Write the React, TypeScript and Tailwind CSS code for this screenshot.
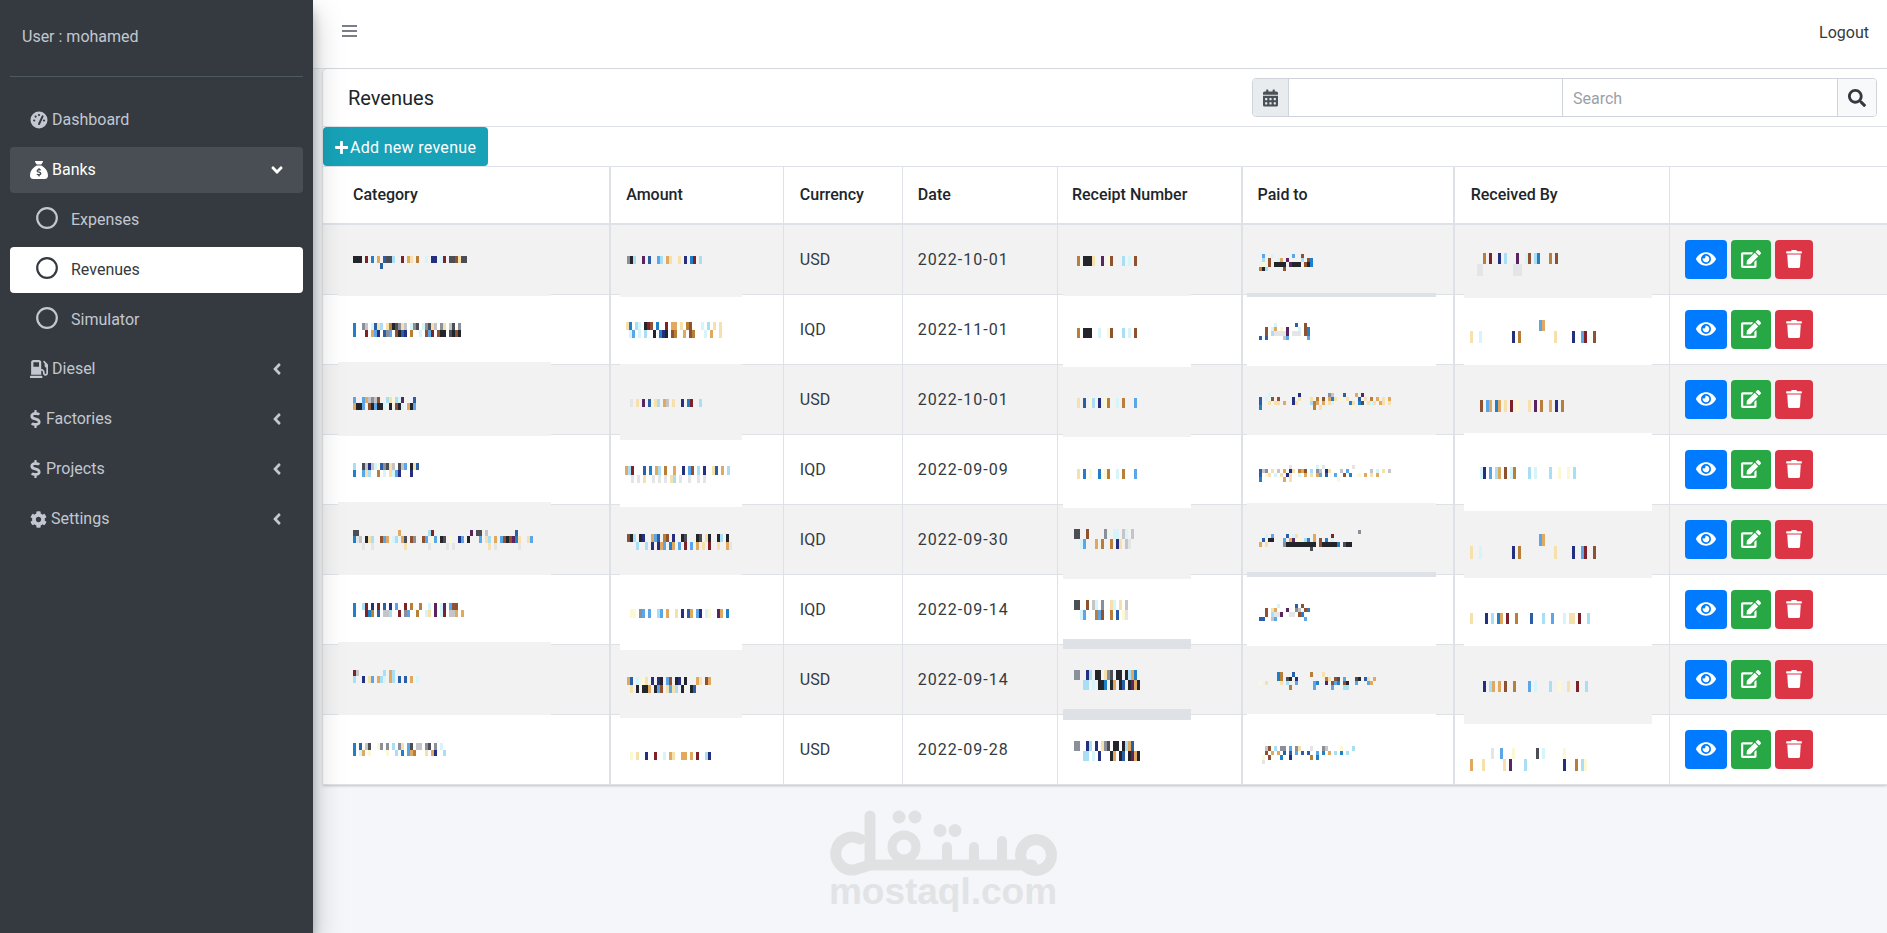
import { FaGasPump, FaDollarSign, FaCog, FaAngleLeft, FaAngleDown, FaCalendarAlt, FaSearch, FaEye, FaEdit, FaTrash, FaPlus } from "react-icons/fa";
import { FaSackDollar } from "react-icons/fa6";
import type { ReactNode } from "react";

const swatch: Record<string, string> = {
  k: "#23252b", b: "#2a5fa8", n: "#24307f", l: "#5ba6e8", c: "#a8dff5", s: "#d6f5fb",
  o: "#e0a95f", r: "#b87f38", w: "#8e5230", m: "#7c2228", p: "#5a2460", y: "#f6e0ac",
  i: "#fdf8d4", g: "#8a8f99", h: "#c5c5c8", e: "#e4e5e7", d: "#4b4f55", B: "#1f80c8",
};

// blurred-out values in the table: each strip is [height, colours], one char = 3px
type Blur = { x: number; y: number; s: [number, string][] };

const category: Blur[] = [
  { x: 30, y: 31, s: [[7, "kkk.m.B.o.bddc..m.oy.r..s.nn.sm.ddwydd"], [6, ".........b"]] },
  { x: 30, y: 28, s: [[7, "B..gh.sbyc.yrkdgyh.sgd.sgdyh.gy.hd.g"], [7, "B...m.oln.bgl.wkbn.r..s.wlm.wkk.dkwk"]] },
  { x: 30, y: 32, s: [[6, "l..lohghw..cyicsp...b"], [7, "okkl.wklkks.k.wks.okl"]] },
  { x: 30, y: 28, s: [[7, "c..dhnhsibgdyh.dhl.kyb"], [7, "B..lyc..r.s.ysln...n.."]] },
  { x: 30, y: 25, s: [[6, "dd.............o.........cm............p.dd.h.........b"], [7, "Beh.kyc..wlo.sc.od.wg..wl.il.kd.i..nl.k...l.yc.o.lwkwpBy..yl"], [7, "...e..e..........y.......e.....e.e...........y.e.......e"]] },
  { x: 30, y: 28, s: [[7, "B..cm.n.m.b.n.l..m.r..r..s.p.sp.lww"], [7, "B...mBr.b.hhc..m.gl..r..sy.p.sm.hho.o"]] },
  { x: 30, y: 25, s: [[6, "mh........c.oc"], [7, "c..n.yl.ocs.oc.b.b.o.s"]] },
  { x: 30, y: 28, s: [[7, "B.b.hd..ig.g.c.gy.ld.hh.gd.g.s"], [6, "B.so.i.....i..c.B.lor...y.on..c"]] },
];
const amount: Blur[] = [
  { x: 16, y: 31, s: [[8, "gkc..p.b..lc.oy..y.n.Bm.c"]] },
  { x: 15, y: 27, s: [[8, "yB.cs.kmw.B..m.oo.y.rw...s.c.y.y"], [8, ".sl.s.c..k.Bnk.wr..o.wr...s.o..y"]] },
  { x: 19, y: 34, s: [[8, "e.y.p.b.yc.oh.y..n.Bm..c"]] },
  { x: 14, y: 31, s: [[9, "ocm...b.B.oc.r..o..n.lw.c.n..yb.o.c"], [8, "..e.e.y..e.e.e.yc.e..e..e.e"]] },
  { x: 16, y: 29, s: [[8, "wkc.kn..olb.rw.n..kd...kd.yk..kc.k"], [8, "...c..c.n.nol.Bo.l.m.l.o.y.m..y..oe"]] },
  { x: 19, y: 34, s: [[9, "ii.gl.l..cl.o..y.n.bo.ln.si..po.B"]] },
  { x: 16, y: 32, s: [[8, "ob.s.iy.n.nk.lw.kn.k...oy.wo"], [8, ".y.k.kko.klw.ylyc.k..kb"]] },
  { x: 19, y: 37, s: [[8, "i.y..n..m..s.oy..oo.o.m..cn"]] },
];
const receipt: Blur[] = [
  { x: 19, y: 31, s: [[10, "r.kkky..p.iw...c.s.w"]] },
  { x: 19, y: 33, s: [[10, "r.kkk..s..iw...c.s.w"]] },
  { x: 19, y: 33, s: [[10, "y.b.ic.n.ir..s.r...l"]] },
  { x: 19, y: 34, s: [[10, "y.B.i..B.ir..s.r...l"]] },
  { x: 16, y: 24, s: [[10, "dd..w.....g..ss.hs.h"], [10, "..sl...o.r..r.ny.he"]] },
  { x: 16, y: 25, s: [[10, "dd..w.hs.g..ys.y.h"], [10, "..sl...rlw..r.b.ie"]] },
  { x: 16, y: 25, s: [[10, "gg..nc.kk.ygd.kk.kcoB"], [10, "...cc.s.kkB.ko.kb.kpok"]] },
  { x: 16, y: 26, s: [[10, "gg..nc.n.ygd.kk.kcob"], [10, "...cc.s.n...ko.kb.kpok"]] },
];
const paid: Blur[] = [
  { x: 16, y: 29, s: [[4, ".l..s......l..w"], [4, ".c.w..so.p....c.wB"], [5, ".i.w.kkkk.pkkk.wkB"], [4, "rkc.....w"]] },
  { x: 16, y: 28, s: [[4, ".....s......b..w"], [4, "..w.so.i.p...s.wB"], [5, "..w.ceeeep.eee.wB"], [4, "b.b.....hl......l"]] },
  { x: 16, y: 28, s: [[4, "...s.........n.........gh...b...o.p"], [4, "b.s.w.w....n.y...y.r.w.oBy.i.y...b.y.r.o.y.o"], [4, "b..y.yy.o..ny....cro.o.ys.....By.Bd.ysy.oy.y"], [5, "B.................r.y..........i.."]] },
  { x: 16, y: 30, s: [[4, "..........e........s.e.........e"], [4, "bhg.y.h.o.ny.row.c.gh.ny...h.l.......h.s.y.h"], [4, "b.iy.s.y.ny..s.o.y.ol.b..l..w.B..i.o.y.o"], [5, "B.......o.y...............i..."]] },
  { x: 16, y: 25, s: [[4, ".................................g"], [4, "..s.l....b.sy.....o.....m"], [4, ".b.kk...l.op.i.cB.o.w.B.s"], [5, "o.y.....gkkkkkkkkkk.wkkkkkB.dkk"], [4, ".................d"]] },
  { x: 16, y: 29, s: [[4, "......s.....b.w"], [4, "..w.yo...p..gh.wB"], [5, "..w.ceep..ee.wB"], [4, "bb..hl.........l"]] },
  { x: 16, y: 27, s: [[5, "......Br...b.....r...y"], [4, "......Br.dk.n.........ry.wd.l...dk.by.o"], [4, "i.y....y.cs.l.....lB..p.wlB.wk..l...lo"], [5, "..........r.......l.....l...cc"]] },
  { x: 16, y: 31, s: [[5, "..hw.c.gg.l.gy...e...gh....i...c"], [4, "..w.o.o.b.b.l.b.b..l.B.o.c.B.c"], [5, ".i.w...B..n......r.B"], [4, ".e"]] },
];
const received: Blur[] = [
  { x: 22, y: 28, s: [[11, "..r.m..n.c...p..sw.cB...r.w"], [12, "ee..........eee"]] },
  { x: 15, y: 25, s: [[11, ".......................lo"], [12, "y..s..........n.r...........y.....n..lm..w"]] },
  { x: 25, y: 35, s: [[12, "w.lo.Bo.y.m.i...y.p.r..o.n.r"]] },
  { x: 25, y: 32, s: [[12, "sn.l.co.w.sr....c.s....c..i..i.c"]] },
  { x: 15, y: 29, s: [[12, ".......................lo"], [13, "y..s..........n.r...........y.....n..lm..w"]] },
  { x: 15, y: 38, s: [[11, "y....n.c.Bo.m..r....b...c..l...s.yy.m..c"]] },
  { x: 28, y: 36, s: [[11, "n.co.o.w..r....l.s....c..i..y..m..c"]] },
  { x: 15, y: 33, s: [[11, ".......e..l...i.......d.s......i"], [12, "o...y......y.p....c............n...r.ci"]] },
];

// patches left behind by the blur: where each cell's fill ends, in page y, [a, b] leaves a grey bar
type Cut = number | [number, number];
const patches: Record<string, { x: number; w: number; cuts: Cut[] }> = {
  category: { x: 15, w: 213, cuts: [296, 362, 436, 502, 575, 642, 715] },
  amount: { x: 9, w: 122, cuts: [297, 364, 440, 507, 575, 650, 718] },
  receipt: { x: 5, w: 128, cuts: [296, 367, 437, 508, 579, [639, 649], [709, 720]] },
  paid: { x: 4, w: 189, cuts: [[293, 297], 366, 435, 503, [572, 577], 646, 714] },
  received: { x: 9, w: 188, cuts: [298, 365, 433, 511, 578, 646, 724] },
};

const rows = [
  ["USD", "2022-10-01"], ["IQD", "2022-11-01"], ["USD", "2022-10-01"], ["IQD", "2022-09-09"],
  ["IQD", "2022-09-30"], ["IQD", "2022-09-14"], ["USD", "2022-09-14"], ["USD", "2022-09-28"],
];

function BlurCell({ col, blurs, row, border }: { col: string; blurs: Blur[]; row: number; border: string }) {
  const { x, w, cuts } = patches[col];
  const rowY = 225 + row * 70;
  const prev = row > 0 ? cuts[row - 1] : 225;
  const next = row < 7 ? cuts[row] : 784;
  const top = typeof prev === "number" ? prev : prev[1];
  const bottom = typeof next === "number" ? next : next[0];
  const fill = row % 2 === 0 ? "#f2f2f2" : "#ffffff";
  const blur = blurs[row];
  let y = blur.y;
  return (
    <td className={`p-0 ${border} border-[#dee2e6]`}>
      <svg className="block h-[69px] w-full overflow-visible">
        <rect x={x} y={top - rowY} width={w} height={bottom - top} fill={fill} />
        {Array.isArray(next) && <rect x={x} y={next[0] - rowY} width={w} height={next[1] - next[0]} fill="#dee2e6" />}
        {blur.s.map(([h, str], i) => {
          const rowTop = y;
          y += h;
          return (
            <g key={i}>
              {str.split("").map((c, j) =>
                swatch[c] ? <rect key={j} x={blur.x + j * 3} y={rowTop} width={3} height={h} fill={swatch[c]} /> : null
              )}
            </g>
          );
        })}
      </svg>
    </td>
  );
}

function GaugeIcon() {
  return (
    <svg width="18" height="18" viewBox="0 0 18 18">
      <circle cx="9" cy="9" r="8.5" fill="currentColor" />
      <g fill="#343a40">
        <circle cx="4.2" cy="9.5" r="1.1" />
        <circle cx="5.6" cy="5.6" r="1.1" />
        <circle cx="9" cy="4" r="1.1" />
        <circle cx="14" cy="9.5" r="1.1" />
      </g>
      <path d="M9 13 L12.6 5.4" stroke="#343a40" strokeWidth="2" strokeLinecap="round" />
    </svg>
  );
}

function NavItem({ icon, label, arrow, active, gap = "gap-1" }: { icon: ReactNode; label: string; arrow?: "left" | "down"; active?: boolean; gap?: string }) {
  return (
    <a className={`flex h-[46px] items-center rounded pl-[20px] pr-[20px] text-[16px] ${active ? "bg-white/10 text-white" : "text-[#c2c7d0]"}`}>
      <span className={`flex items-center ${gap}`}>
        {icon}
        {label}
      </span>
      {arrow === "left" && <FaAngleLeft className="ml-auto h-[18px] w-[12px]" />}
      {arrow === "down" && <FaAngleDown className="ml-auto h-[18px] w-[16px] -mr-[2px]" />}
    </a>
  );
}

function SubItem({ label, active }: { label: string; active?: boolean }) {
  return (
    <a className={`flex h-[46px] items-center gap-[13px] rounded pl-[26px] text-[16px] ${active ? "bg-white text-[#343a40]" : "text-[#c2c7d0]"}`}>
      <svg width="22" height="22" viewBox="0 0 22 22" className="-mt-[3px]">
        <circle cx="11" cy="11" r="9.8" fill="none" stroke="currentColor" strokeWidth="2.2" />
      </svg>
      {label}
    </a>
  );
}

function Watermark() {
  return (
    <div className="absolute left-[830px] top-[810px] flex w-[230px] flex-col items-center">
      <svg width="230" height="70" viewBox="48 50 230 70" fill="none" stroke="#e0e1e3" strokeLinecap="round" strokeLinejoin="round">
        <circle cx="254" cy="95" r="15.5" strokeWidth="11" />
        <circle cx="122" cy="87" r="12" strokeWidth="9" />
        <path d="M78 79 A16.5 16.5 0 1 0 72 110 L88 105 L250 105" strokeWidth="11" />
        <path d="M88 56 V104" strokeWidth="11" />
        <path d="M220 81 V104 M192 87 V104 M165 87 V104" strokeWidth="10" />
        <g fill="#e0e1e3" stroke="none">
          <circle cx="158" cy="70.5" r="6.5" />
          <circle cx="173" cy="70.5" r="6.5" />
          <circle cx="117" cy="57" r="6.5" />
          <circle cx="133" cy="57" r="6.5" />
        </g>
      </svg>
      <div className="-ml-[4px] -mt-[8px] font-['Liberation_Sans',sans-serif] text-[37px] font-bold leading-[40px] text-[#e2e3e5]">mostaql.com</div>
    </div>
  );
}

const headers = ["Category", "Amount", "Currency", "Date", "Receipt Number", "Paid to", "Received By", ""];
const widths = [287, 173, 119, 155, 184, 212, 216, 217];
const borders = ["border-r-2", "border-r", "border-r", "border-r", "border-r-2", "border-r-2", "border-r", ""];
const pads = ["pl-[30px]", "pl-[15px]", "pl-4", "pl-[15px]", "pl-[14px]", "pl-[15px]", "pl-4", ""];

export default function App() {
  return (
    <div className="relative flex h-[933px] w-[1887px] overflow-hidden bg-[#f4f6f9] font-['Roboto',sans-serif] text-[16px] text-[#212529]">
      {/* Sidebar */}
      <aside className="z-10 flex w-[313px] shrink-0 flex-col bg-[#343a40] px-[10px] shadow-[0_14px_28px_rgba(0,0,0,0.25),0_10px_10px_rgba(0,0,0,0.22)]">
        <div className="flex h-[77px] items-center border-b border-[#4f5962] pb-[3px] pl-[12px] text-[#c2c7d0]">User : mohamed</div>
        <nav className="mt-[20px] flex flex-col gap-[3.9px]">
          <NavItem icon={<GaugeIcon />} label="Dashboard" />
          <NavItem icon={<FaSackDollar className="h-[18px] w-[18px]" />} label="Banks" arrow="down" active />
          <SubItem label="Expenses" />
          <SubItem label="Revenues" active />
          <SubItem label="Simulator" />
          <NavItem icon={<FaGasPump className="h-[18px] w-[18px]" />} label="Diesel" arrow="left" />
          <NavItem icon={<FaDollarSign className="h-[18px] w-[11px]" />} label="Factories" arrow="left" gap="gap-[5px]" />
          <NavItem icon={<FaDollarSign className="h-[18px] w-[11px]" />} label="Projects" arrow="left" gap="gap-[5px]" />
          <NavItem icon={<FaCog className="h-[17px] w-[17px]" />} label="Settings" arrow="left" />
        </nav>
      </aside>

      {/* Main */}
      <main className="min-w-0 flex-1">
        <header className="flex h-[69px] items-center justify-between border-b border-[#dee2e6] bg-white pl-[29px] pr-[18px]">
          <svg width="15" height="14" viewBox="0 0 15 14" className="-translate-y-[3px]">
            <path d="M0 2 H15 M0 7 H15 M0 12 H15" stroke="#7b7f85" strokeWidth="2" />
          </svg>
          <span className="-translate-y-[1px] text-[#343a40]">Logout</span>
        </header>

        <div className="pl-[10px]">
          <div className="rounded-tl bg-white shadow-[0_0_1px_rgba(0,0,0,0.125),0_1px_3px_rgba(0,0,0,0.2)]">
            <div className="flex h-[58px] items-center justify-between border-b border-[#dee2e6] pl-[25px] pr-[10px]">
              <h1 className="text-[20px] font-normal">Revenues</h1>
              <div className="flex h-[39px] w-[625px] overflow-hidden rounded border border-[#ced4da]">
                <span className="flex w-[36px] items-center justify-center border-r border-[#ced4da] bg-[#e9ecef] text-[#495057]">
                  <FaCalendarAlt className="h-[18px] w-[15px]" />
                </span>
                <div className="w-[274px] border-r border-[#ced4da]" />
                <div className="flex flex-1 items-center pl-[10px] pt-[2px] text-[#9aa1a8]">Search</div>
                <span className="flex w-[39px] items-center justify-center border-l border-[#ced4da] bg-[#f8f9fa] text-[#343a40]">
                  <FaSearch className="h-[18px] w-[18px]" />
                </span>
              </div>
            </div>

            <div className="flex h-[39px] items-start">
              <button className="flex h-[39px] w-[165px] items-center gap-[1px] rounded bg-[#17a2b8] pl-[11px] pt-[2px] tracking-[0.3px] text-white">
                <FaPlus className="h-[15px] w-[15px]" />
                Add new revenue
              </button>
            </div>

            <table className="w-[1564px] table-fixed border-collapse">
              <colgroup>
                {widths.map((w, i) => (
                  <col key={i} style={{ width: w }} />
                ))}
              </colgroup>
              <thead>
                <tr className="h-[57px] border-y-2 border-t border-[#dee2e6]">
                  {headers.map((h, i) => (
                    <th key={i} className={`${pads[i]} ${borders[i]} border-[#dee2e6] text-left font-medium`}>{h}</th>
                  ))}
                </tr>
              </thead>
              <tbody>
                {rows.map(([currency, date], r) => (
                  <tr key={r} className={`h-[70px] border-b border-[#dee2e6] ${r % 2 === 0 ? "bg-[#f2f2f2]" : "bg-white"}`}>
                    <BlurCell col="category" blurs={category} row={r} border={borders[0]} />
                    <BlurCell col="amount" blurs={amount} row={r} border={borders[1]} />
                    <td className={`${pads[2]} ${borders[2]} border-[#dee2e6] pt-[2px] text-[#343a40]`}>{currency}</td>
                    <td className={`${pads[3]} ${borders[3]} border-[#dee2e6] pt-[2px] tracking-[1px] text-[#343a40]`}>{date}</td>
                    <BlurCell col="receipt" blurs={receipt} row={r} border={borders[4]} />
                    <BlurCell col="paid" blurs={paid} row={r} border={borders[5]} />
                    <BlurCell col="received" blurs={received} row={r} border={borders[6]} />
                    <td className="pl-[15px]">
                      <div className="flex gap-[4px]">
                        <button className="flex h-[39px] w-[42px] items-center justify-center rounded bg-[#007bff] text-white">
                          <FaEye className="h-[18px] w-[20px]" />
                        </button>
                        <button className="flex h-[39px] w-[40px] items-center justify-center rounded bg-[#28a745] text-white">
                          <FaEdit className="h-[18px] w-[20px]" />
                        </button>
                        <button className="flex h-[39px] w-[38px] items-center justify-center rounded bg-[#dc3545] text-white">
                          <FaTrash className="h-[18px] w-[16px]" />
                        </button>
                      </div>
                    </td>
                  </tr>
                ))}
              </tbody>
            </table>
          </div>
        </div>
      </main>
      <Watermark />
    </div>
  );
}
